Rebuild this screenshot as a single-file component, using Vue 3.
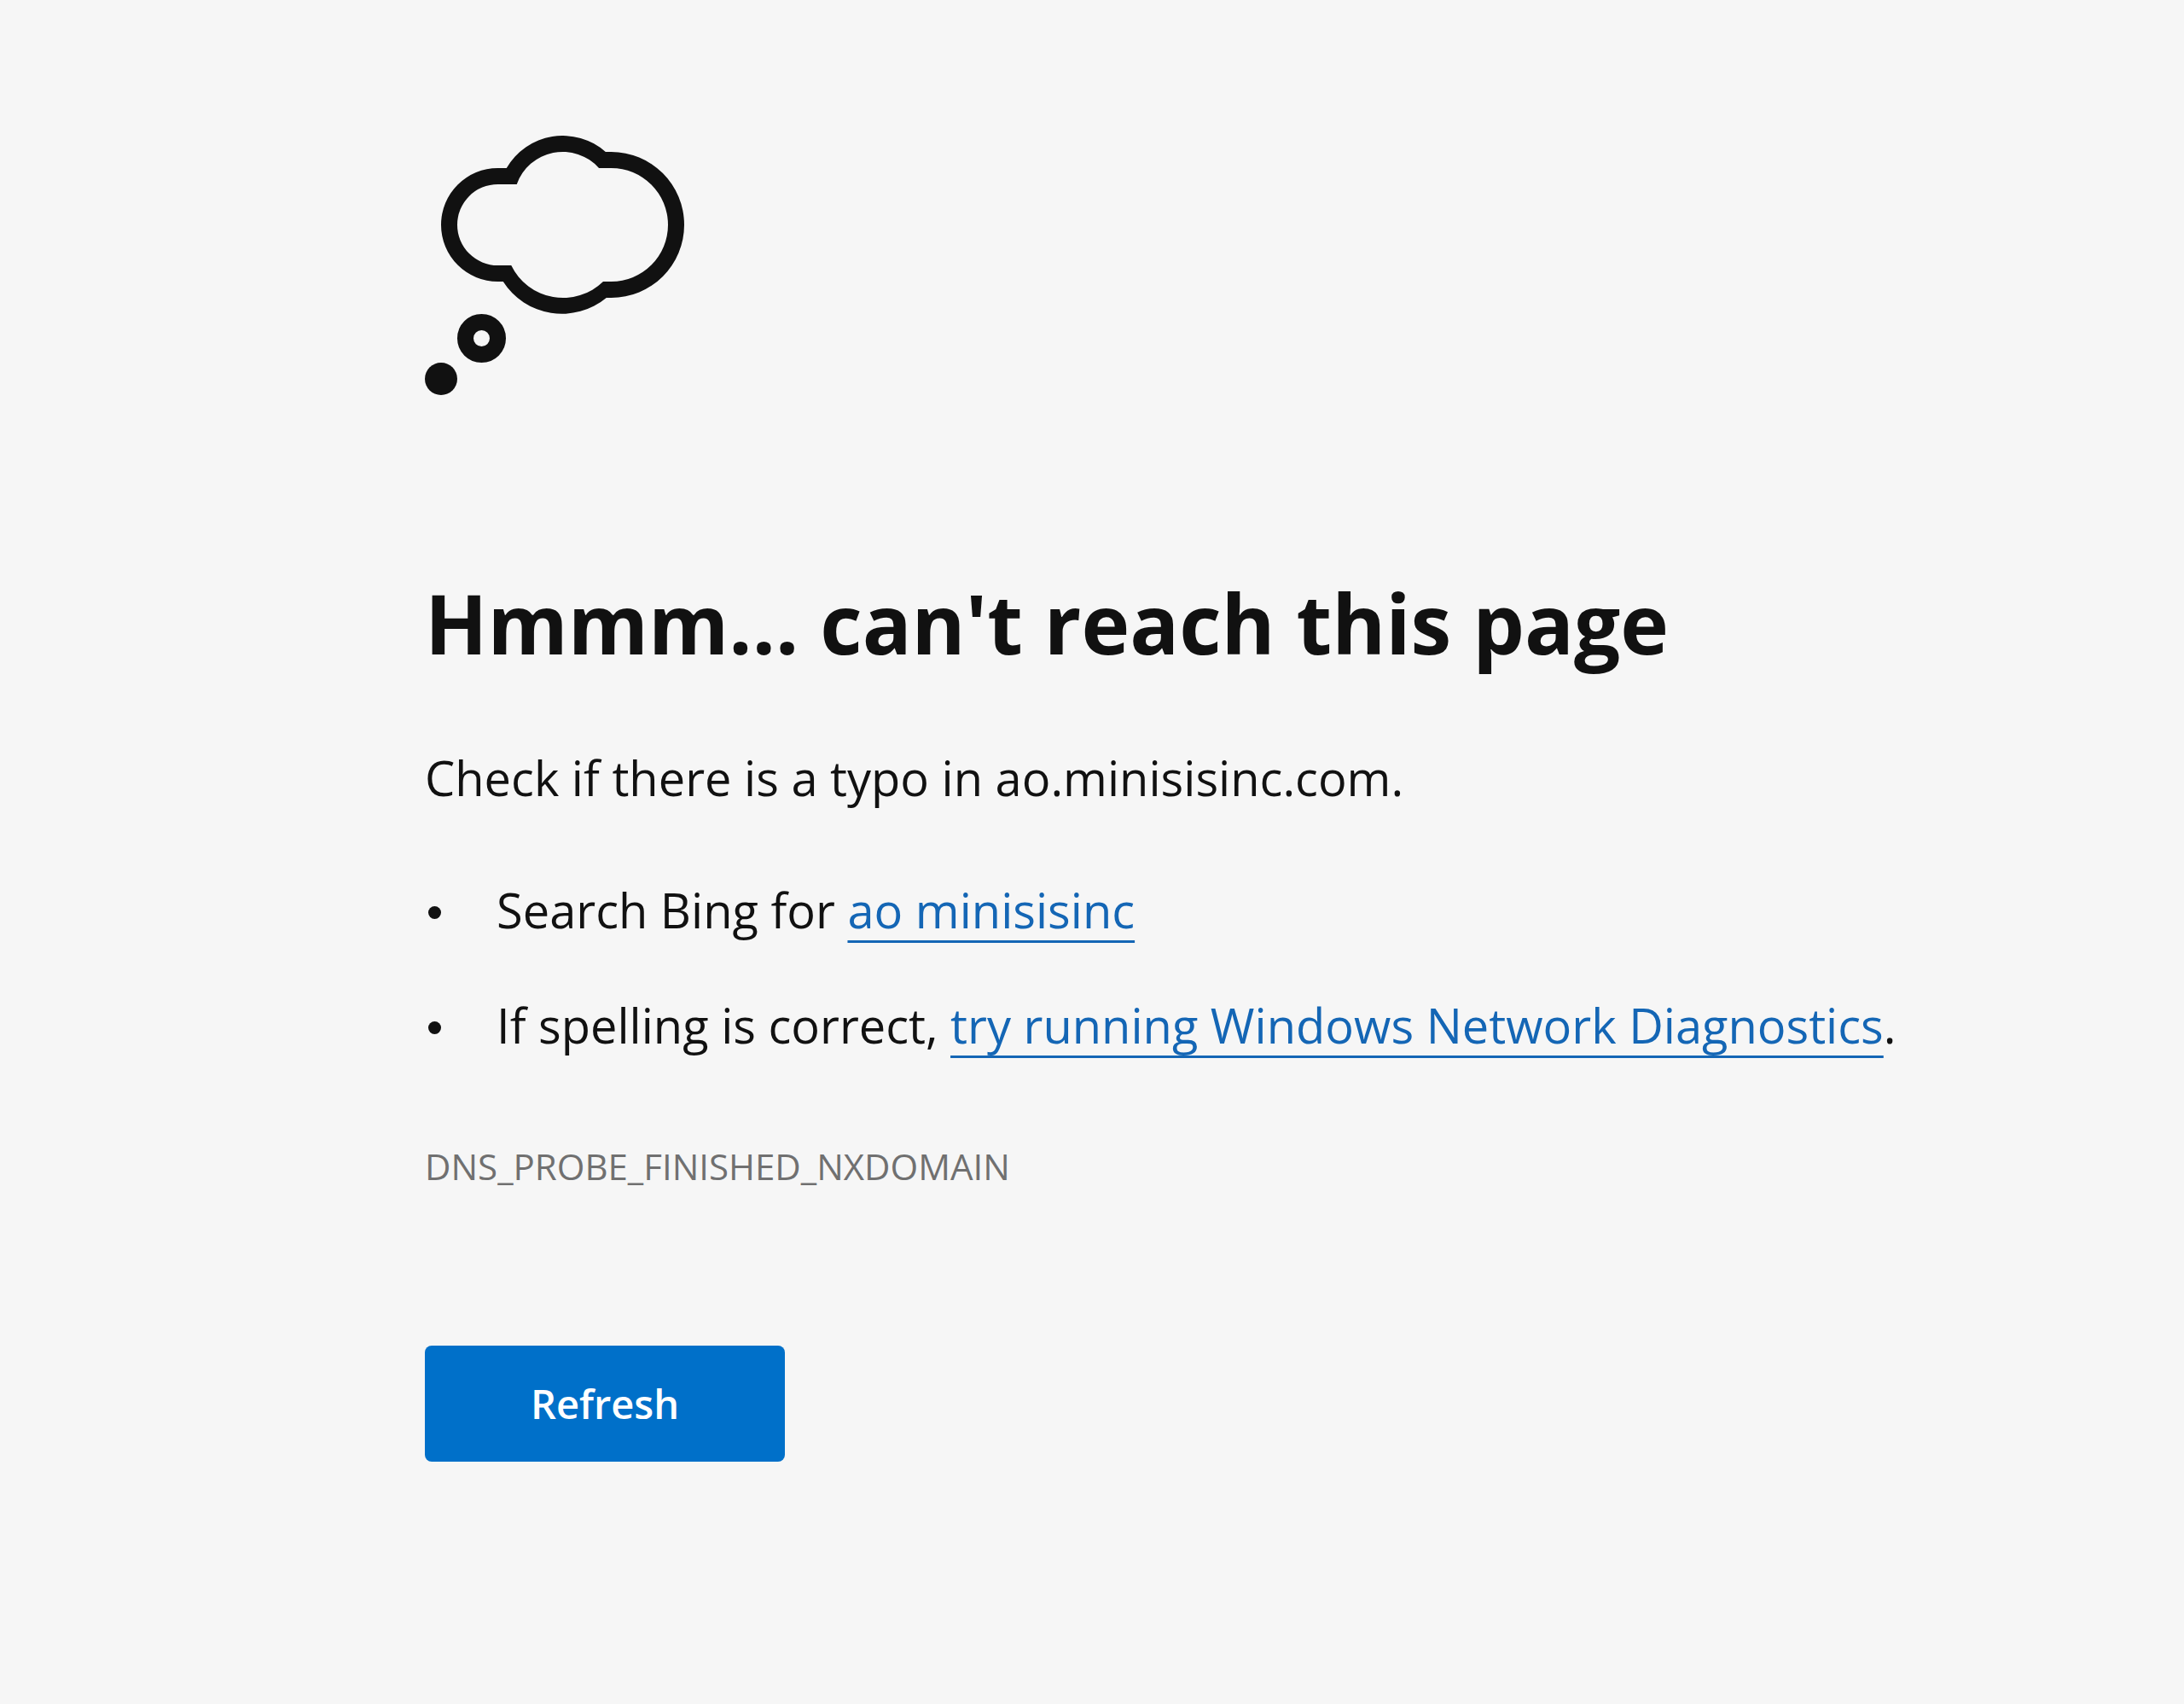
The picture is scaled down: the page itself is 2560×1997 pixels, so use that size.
<script setup>
const host = 'ao.minisisinc.com'
const query = 'ao minisisinc'
const errorCode = 'DNS_PROBE_FINISHED_NXDOMAIN'

function reload() {
  window.location.reload()
}
</script>

<template>
  <main class="error-page">
    <svg class="thought" viewBox="0 0 16 16" aria-hidden="true">
      <path
        fill-rule="evenodd"
        d="M4.5 2H5.04A4 4 0 0 1 11.15 1H11.5A4.5 4.5 0 0 1 11.5 10H11.2A4.3 4.3 0 0 1 4.83 9H4.5A3.5 3.5 0 0 1 4.5 2Z
           M4.5 3H5.67A3 3 0 0 1 10.74 2H11.5A3.5 3.5 0 0 1 11.5 9H11A3.55 3.55 0 0 1 5.33 8H4.5A2.5 2.5 0 0 1 4.5 3Z"
      />
      <circle class="ring" cx="3.5" cy="12.5" r="1" />
      <circle cx="1" cy="15" r="1" />
    </svg>

    <h1>Hmmm… can't reach this page</h1>
    <p class="summary">Check if there is a typo in {{ host }}.</p>

    <ul class="suggestions">
      <li>Search Bing for <a href="#search">{{ query }}</a></li>
      <li>If spelling is correct, <a href="#diagnostics">try running Windows Network Diagnostics</a>.</li>
    </ul>

    <p class="code">{{ errorCode }}</p>

    <button class="refresh" type="button" @click="reload">Refresh</button>
  </main>
</template>

<style>
body {
  margin: 0;
  background: #f6f6f6;
}
</style>

<style scoped>
.error-page {
  display: flex;
  flex-direction: column;
  align-items: flex-start;
  box-sizing: border-box;
  min-height: 100vh;
  padding: 159px 80px 120px 498px;
  color: #111;
  font-family: "Segoe UI", "Open Sans", "Noto Sans", sans-serif;
}

.thought {
  width: 304px;
  height: 304px;
  fill: #111;
}

.ring {
  fill: none;
  stroke: #111;
  stroke-width: 1;
}

h1 {
  margin: 207px 0 0;
  font-size: 96px;
  font-weight: 700;
  line-height: 120px;
}

.summary {
  margin: 81px 0 0;
  font-size: 56px;
  line-height: 80px;
}

.suggestions {
  display: flex;
  flex-direction: column;
  gap: 55px;
  margin: 75px 0 0;
  padding: 0;
  list-style: none;
  font-size: 56px;
  line-height: 80px;
}

.suggestions li {
  position: relative;
  padding-left: 84px;
}

.suggestions li::before {
  content: "";
  position: absolute;
  left: 4px;
  top: 36px;
  width: 15px;
  height: 15px;
  border-radius: 50%;
  background: #111;
}

a {
  color: #1466b5;
  text-decoration: underline;
  text-decoration-thickness: 3px;
  text-underline-offset: 14px;
  text-decoration-skip-ink: none;
}

.code {
  margin: 96px 0 0;
  color: #707070;
  font-size: 42px;
  font-weight: 500;
  line-height: 60px;
}

.refresh {
  width: 422px;
  height: 136px;
  margin: 180px 0 0;
  padding: 0;
  border: 0;
  border-radius: 8px;
  background: #0070c9;
  color: #fff;
  font-family: inherit;
  font-size: 47px;
  font-weight: 600;
  line-height: 68px;
  cursor: pointer;
}
</style>
